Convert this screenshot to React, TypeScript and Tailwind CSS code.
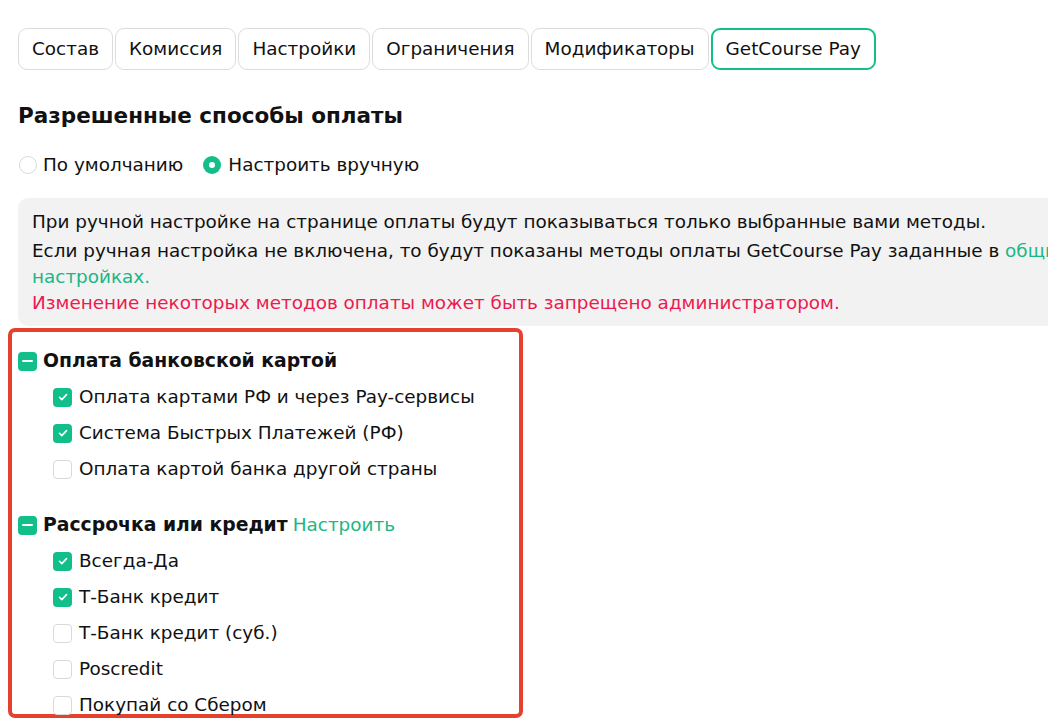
import React from "react";

const tabs = ["Состав", "Комиссия", "Настройки", "Ограничения", "Модификаторы", "GetCourse Pay"];

const groups = [
  {
    title: "Оплата банковской картой",
    link: "",
    items: [
      { label: "Оплата картами РФ и через Pay-сервисы", on: true },
      { label: "Система Быстрых Платежей (РФ)", on: true },
      { label: "Оплата картой банка другой страны", on: false },
    ],
  },
  {
    title: "Рассрочка или кредит",
    link: "Настроить",
    items: [
      { label: "Всегда-Да", on: true },
      { label: "Т-Банк кредит", on: true },
      { label: "Т-Банк кредит (суб.)", on: false },
      { label: "Poscredit", on: false },
      { label: "Покупай со Сбером", on: false },
    ],
  },
];

function Box({ state }: { state: "on" | "off" | "mixed" }) {
  if (state === "off") {
    return <span className="w-[19px] h-[19px] shrink-0 rounded-[4px] border border-[#d9d9d9] bg-white" />;
  }
  return (
    <span className="w-[19px] h-[19px] shrink-0 rounded-[4px] bg-[#12bf8a] flex items-center justify-center">
      {state === "on" ? (
        <svg width="12" height="12" viewBox="0 0 12 12" fill="none">
          <path d="M2.5 6.3l2.3 2.3 4.7-5" stroke="white" strokeWidth="1.6" strokeLinecap="round" strokeLinejoin="round" />
        </svg>
      ) : (
        <span className="w-[11px] h-[2px] bg-white rounded-full" />
      )}
    </span>
  );
}

export default function App() {
  return (
    <div className="w-[1048px] h-[726px] overflow-hidden bg-white text-[#111] text-[18.4px]" style={{ fontFamily: '"DejaVu Sans", sans-serif' }}>
      <div className="w-[1180px] px-[18px] pt-[28px]">
        {/* Tabs */}
        <div className="flex gap-[2px]">
          {tabs.map((t, i) => (
            <div
              key={t}
              className={
                "h-[42px] px-[13px] flex items-center rounded-[9px] border bg-white " +
                (i === tabs.length - 1 ? "border-2 border-[#12bf8a]" : "border-[#dcdcdc]")
              }
            >
              {t}
            </div>
          ))}
        </div>

        <h2 className="mt-[31px] text-[21.5px] leading-[30px] font-bold">Разрешенные способы оплаты</h2>

        {/* Mode */}
        <div className="mt-[21px] h-[26px] flex items-center">
          <span className="w-[18px] h-[18px] ml-[1px] rounded-full border border-[#d9d9d9]" />
          <span className="ml-[6px]">По умолчанию</span>
          <span className="ml-[20px] w-[18px] h-[18px] rounded-full bg-[#12bf8a] flex items-center justify-center">
            <span className="w-[6px] h-[6px] rounded-full bg-white" />
          </span>
          <span className="ml-[7px]">Настроить вручную</span>
        </div>

        {/* Notice */}
        <div className="mt-[20px] rounded-[10px] bg-[#f2f2f2] px-[14px] pt-[11px] pb-[10px] leading-[26px] whitespace-nowrap">
          <div>При ручной настройке на странице оплаты будут показываться только выбранные вами методы.</div>
          <div className="mt-[3px]">
            Если ручная настройка не включена, то будут показаны методы оплаты GetCourse Pay заданные в{" "}
            <span className="text-[#1ab784]">общих</span>
          </div>
          <div className="text-[#1ab784]">настройках.</div>
          <div className="text-[#ec1a4e]">Изменение некоторых методов оплаты может быть запрещено администратором.</div>
        </div>

        {/* Payment methods */}
        <div className="mt-[2px] -ml-[10px] w-[515px] h-[390px] border-4 border-[#e5412f] rounded-[7px] pl-[6px] pt-[18px]">
          {groups.map((g, gi) => (
            <div key={g.title} className={"flex flex-col gap-[14px] " + (gi > 0 ? "mt-[34px]" : "")}>
              <div className="h-[22px] flex items-center gap-[6px]">
                <Box state="mixed" />
                <span className="font-bold text-[18.8px]">{g.title}</span>
                {g.link && <span className="text-[#1ab784] -ml-[1px]">{g.link}</span>}
              </div>
              {g.items.map((it) => (
                <div key={it.label} className="h-[22px] flex items-center gap-[7px] pl-[35px]">
                  <Box state={it.on ? "on" : "off"} />
                  <span>{it.label}</span>
                </div>
              ))}
            </div>
          ))}
        </div>
      </div>
    </div>
  );
}
